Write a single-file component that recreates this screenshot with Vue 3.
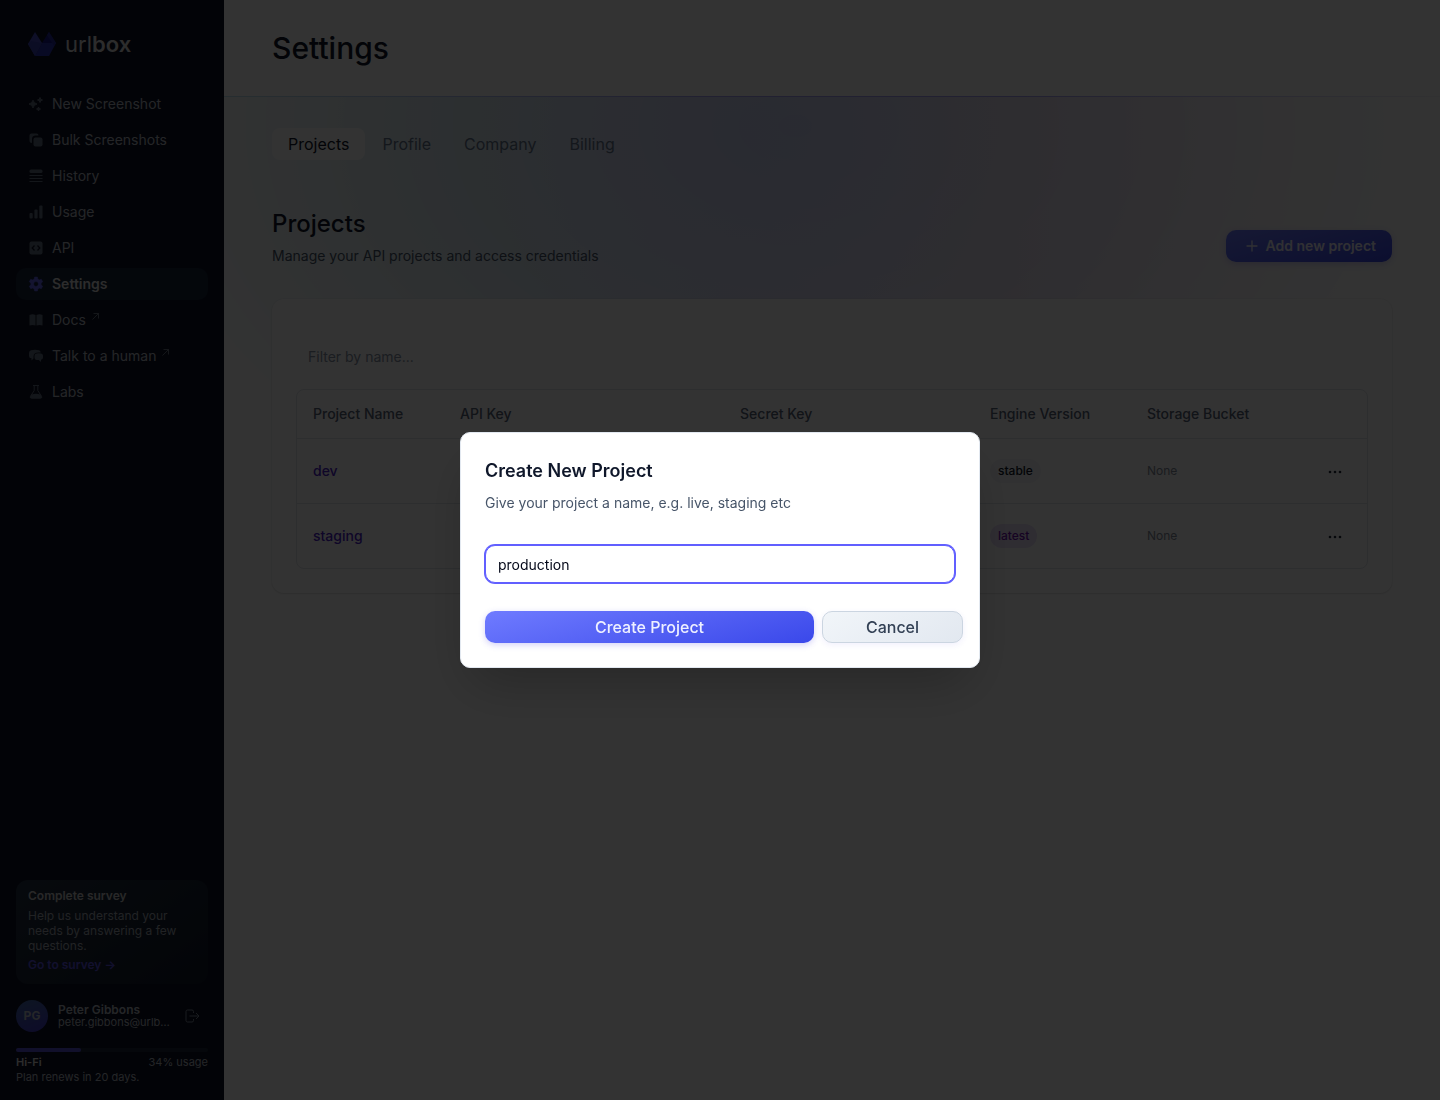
<script setup>
import { ref } from 'vue'

const nav = [
  { label: 'New Screenshot', icon: 'sparkles' },
  { label: 'Bulk Screenshots', icon: 'stack' },
  { label: 'History', icon: 'rows' },
  { label: 'Usage', icon: 'bars' },
  { label: 'API', icon: 'code' },
  { label: 'Settings', icon: 'gear', active: true },
  { label: 'Docs', icon: 'book', external: true },
  { label: 'Talk to a human', icon: 'chat', external: true },
  { label: 'Labs', icon: 'flask' },
]

const tabs = ['Projects', 'Profile', 'Company', 'Billing']
const activeTab = ref('Projects')

const projects = [
  { name: 'dev', engine: 'stable', bucket: 'None' },
  { name: 'staging', engine: 'latest', bucket: 'None' },
]

const usage = 34
const filter = ref('')
const projectName = ref('production')
const showDialog = ref(true)
</script>

<template>
  <div class="layout">
    <aside class="sidebar">
      <a href="#" class="logo">
        <svg width="28" height="24" viewBox="0 0 28 24">
          <path d="M7 0L14 11L7 24L0 12Z" fill="#464bc4" />
          <path d="M21 0L28 11H14Z" fill="#15178c" />
          <path d="M14 11H28L21 24H7Z" fill="#2c33b4" />
          <path d="M21 0L28 11L26 14L19 3Z" fill="#252a9c" />
          <path d="M0 12L3 9L14 11L7 24Z" fill="#3a40b4" />
        </svg>
        <span class="logo-text">url<b>box</b></span>
      </a>

      <nav class="nav">
        <a v-for="n in nav" :key="n.label" href="#" class="nav-item" :class="{ active: n.active }">
          <svg class="nav-icon" width="16" height="16" viewBox="0 0 16 16" fill="currentColor">
            <g v-if="n.icon === 'sparkles'" stroke="currentColor">
              <path d="M5 4.200Q5.700 7.300 9 8Q5.700 8.700 5 12Q4.300 8.700 1 8Q4.300 7.300 5 4.200Z" />
              <path d="M12 1.500Q12.300 3.700 14.500 4Q12.300 4.300 12 6.500Q11.700 4.300 9.500 4Q11.700 3.700 12 1.500Z" />
              <path d="M10.500 11Q10.700 12.800 12.500 13Q10.700 13.200 10.500 15Q10.300 13.200 8.500 13Q10.300 12.800 10.500 11Z" />
            </g>
            <g v-else-if="n.icon === 'stack'">
              <path d="M3.500 1.500h5A2 2 0 0 1 10.500 3.500H7A3.500 3.500 0 0 0 4 7v4A2.500 2.500 0 0 1 1.500 8.500v-5a2 2 0 0 1 2-2z" />
              <rect x="5.500" y="5.500" width="9" height="9" rx="2" />
            </g>
            <g v-else-if="n.icon === 'rows'">
              <rect x="1.500" y="1.500" width="13" height="3.500" rx="1.500" />
              <path d="M1.500 7h13v1h-13zM1.500 10h13v1h-13zM1.500 13h13v1h-13z" />
            </g>
            <g v-else-if="n.icon === 'bars'">
              <rect x="1.500" y="9" width="3.200" height="5.500" rx="1" />
              <rect x="6.400" y="5.500" width="3.200" height="9" rx="1" />
              <rect x="11.300" y="1.500" width="3.200" height="13" rx="1" />
            </g>
            <g v-else-if="n.icon === 'code'">
              <rect x="1.500" y="1.500" width="13" height="13" rx="2" />
              <path d="M6.500 5.500L4.200 8l2.300 2.500M9.500 5.500L11.800 8l-2.300 2.500" fill="none" stroke="#0c1226" stroke-width="1.300" />
            </g>
            <g v-else-if="n.icon === 'gear'">
              <path
                fill-rule="evenodd"
                d="M6.600 1h2.800l.5 2.100 1.300.8 2.100-.6 1.400 2.400L13.100 7.200v1.600l1.600 1.500-1.400 2.400-2.100-.6-1.300.8L9.400 15H6.600l-.5-2.100-1.300-.8-2.100.6-1.400-2.400 1.600-1.500V7.200L1.300 5.700l1.400-2.400 2.100.6 1.300-.8zM8 5.600a2.400 2.400 0 1 0 0 4.800 2.400 2.400 0 0 0 0-4.800z"
                stroke="currentColor"
                stroke-width=".5"
                stroke-linejoin="round"
              />
            </g>
            <g v-else-if="n.icon === 'book'">
              <path d="M1.500 3Q4.500 1.700 7.500 3V13.500Q4.500 12.700 1.500 13.500zM8.500 3Q11.500 1.700 14.500 3V13.500Q11.500 12.700 8.500 13.500z" />
            </g>
            <g v-else-if="n.icon === 'chat'">
              <path d="M3 2.200Q7 1.200 11 2.200Q12.500 2.700 12.700 4.500Q5.500 3.700 5.500 8.500V10.500L3.500 12.500V10.300Q1 10.200 1 8V5Q1 2.700 3 2.200z" />
              <path d="M8.500 5.500Q10.500 5.200 13 5.500Q15 5.800 15 7.800V9.500Q15 11.500 13 11.800V14L10.800 12H8.500Q6.500 11.800 6.500 9.500V7.800Q6.500 5.800 8.500 5.500z" />
            </g>
            <g v-else>
              <path d="M5 1.500h6M6.200 1.500V6.500L2.500 12.300Q1.500 14 3.500 14H12.500Q14.500 14 13.500 12.300L9.800 6.500V1.500" fill="none" stroke="currentColor" />
              <path d="M3.500 10.500Q8 9 12.500 10.500L14 13.500Q13 14.500 12 14.500H4Q3 14.500 2 13.500z" />
            </g>
          </svg>
          <span>{{ n.label }}</span>
          <svg v-if="n.external" class="external" width="7" height="7" viewBox="0 0 7 7" fill="none" stroke="currentColor">
            <path d="M.5 6.500L6.500 .5M1.500 .5h5v5" stroke-width=".8" />
          </svg>
        </a>
      </nav>

      <div class="survey">
        <h4>Complete survey</h4>
        <p>Help us understand your needs by answering a few questions.</p>
        <a href="#">Go to survey →</a>
      </div>

      <div class="user">
        <span class="avatar">PG</span>
        <div class="user-info">
          <strong>Peter Gibbons</strong>
          <span>peter.gibbons@urlb…</span>
        </div>
        <button class="logout" aria-label="Log out">
          <svg width="16" height="16" viewBox="0 0 16 16" fill="none" stroke="currentColor" stroke-linejoin="round">
            <path d="M9.500 5V3.500a1.500 1.500 0 0 0-1.500-1.500H3.500A1.500 1.500 0 0 0 2 3.500v9A1.500 1.500 0 0 0 3.500 14H8a1.500 1.500 0 0 0 1.500-1.500V11M5.500 8H15M12 5l3 3-3 3" />
          </svg>
        </button>
      </div>

      <div class="plan">
        <div class="meter"><div class="meter-fill" :style="{ width: usage + '%' }"></div></div>
        <div class="plan-row">
          <strong>Hi-Fi</strong>
          <span>{{ usage }}% usage</span>
        </div>
        <div>Plan renews in 20 days.</div>
      </div>
    </aside>

    <main class="main">
      <header class="page-head">
        <h1>Settings</h1>
      </header>

      <div class="content">
        <div class="tabs">
          <button
            v-for="t in tabs"
            :key="t"
            class="tab"
            :class="{ active: t === activeTab }"
            @click="activeTab = t"
          >{{ t }}</button>
        </div>

        <div class="section-head">
          <div>
            <h2>Projects</h2>
            <p>Manage your API projects and access credentials</p>
          </div>
          <button class="btn btn-primary btn-add" @click="showDialog = true">
            <svg width="12" height="12" viewBox="0 0 12 12" stroke="currentColor" stroke-width="1.300" stroke-linecap="round">
              <path d="M6 1v10M1 6h10" />
            </svg>
            Add new project
          </button>
        </div>

        <section class="card">
          <div class="toolbar">
            <input v-model="filter" class="filter" type="text" placeholder="Filter by name..." aria-label="Filter by name">
          </div>
          <div class="table-wrap">
            <table>
              <colgroup>
                <col class="col-name">
                <col class="col-api">
                <col class="col-secret">
                <col class="col-engine">
                <col>
                <col class="col-menu">
              </colgroup>
              <thead>
                <tr>
                  <th>Project Name</th>
                  <th>API Key</th>
                  <th>Secret Key</th>
                  <th>Engine Version</th>
                  <th>Storage Bucket</th>
                  <th></th>
                </tr>
              </thead>
              <tbody>
                <tr v-for="p in projects" :key="p.name">
                  <td><a href="#" class="project-link">{{ p.name }}</a></td>
                  <td></td>
                  <td></td>
                  <td><span class="badge" :class="p.engine">{{ p.engine }}</span></td>
                  <td class="bucket">{{ p.bucket }}</td>
                  <td class="menu-cell">
                    <button class="btn-menu" aria-label="Project menu">
                      <svg width="14" height="4" viewBox="0 0 14 4" fill="currentColor">
                        <circle cx="2" cy="2" r="1.300" />
                        <circle cx="7" cy="2" r="1.300" />
                        <circle cx="12" cy="2" r="1.300" />
                      </svg>
                    </button>
                  </td>
                </tr>
              </tbody>
            </table>
          </div>
        </section>
      </div>
    </main>

    <div v-if="showDialog" class="overlay">
      <form class="dialog" role="dialog" aria-labelledby="dialog-title" @submit.prevent="showDialog = false">
        <h3 id="dialog-title">Create New Project</h3>
        <label for="project-name">Give your project a name, e.g. live, staging etc</label>
        <input id="project-name" v-model="projectName" type="text">
        <div class="dialog-actions">
          <button type="submit" class="btn btn-primary btn-create">Create Project</button>
          <button type="button" class="btn btn-cancel" @click="showDialog = false">Cancel</button>
        </div>
      </form>
    </div>
  </div>
</template>

<style>
body {
  margin: 0;
  font-family: Inter, "Liberation Sans", sans-serif;
}
</style>

<style scoped>
* { box-sizing: border-box; }
h1, h2, h3, h4, p { margin: 0; font-weight: 500; }
button, input { font-family: inherit; }
button { cursor: pointer; }
a { text-decoration: none; }

.layout {
  display: flex;
  min-height: 100vh;
  background: white;
}

/* sidebar */
.sidebar {
  width: 224px;
  flex-shrink: 0;
  display: flex;
  flex-direction: column;
  padding: 32px 16px 15px;
  background: #0c1226;
  color: #b4bac4;
}
.logo {
  display: flex;
  align-items: center;
  gap: 9px;
  height: 24px;
  padding-left: 12px;
  color: #dcdcdc;
}
.logo-text { font-size: 22px; line-height: 24px; }
.logo-text b { font-weight: 600; }
.nav {
  display: flex;
  flex-direction: column;
  gap: 4px;
  margin-top: 32px;
}
.nav-item {
  display: flex;
  align-items: center;
  gap: 8px;
  height: 32px;
  padding: 0 12px;
  border-radius: 10px;
  color: #b4bac4;
  font-size: 14px;
  line-height: 20px;
}
.nav-icon { color: #626f80; }
.nav-item.active {
  background: #16233a;
  color: #dcdcdc;
  font-weight: 600;
}
.active .nav-icon { color: #6366f1; }
.external { margin: 0 0 8px -2px; color: #7d8797; }
.survey {
  margin-top: auto;
  padding: 8px 12px 12px;
  border-radius: 12px;
  background: linear-gradient(145deg, #223042, #101829);
  font-size: 12px;
  line-height: 15px;
  color: #a4abb5;
}
.survey h4 {
  margin-bottom: 5px;
  font-size: 12px;
  font-weight: 600;
  color: #c8c8c8;
}
.survey p { font-weight: 400; }
.survey a {
  display: block;
  margin-top: 4px;
  font-weight: 600;
  color: #5a50e0;
}
.user {
  display: flex;
  align-items: center;
  gap: 10px;
  margin-top: 16px;
}
.avatar {
  width: 32px;
  height: 32px;
  flex-shrink: 0;
  border-radius: 50%;
  background: linear-gradient(160deg, #3f6aa8, #4338ca);
  color: #b8bcc8;
  font-size: 12px;
  font-weight: 700;
  line-height: 32px;
  text-align: center;
}
.user-info {
  flex: 1;
  display: flex;
  flex-direction: column;
  font-size: 11px;
  line-height: 13px;
  white-space: nowrap;
}
.user-info strong { font-size: 12px; font-weight: 600; }
.logout {
  display: flex;
  margin-right: 8px;
  padding: 0;
  border: 0;
  background: none;
  color: #7d8797;
}
.plan {
  margin-top: 16px;
  font-size: 11px;
  line-height: 15px;
}
.meter {
  height: 4px;
  margin-bottom: 3px;
  border-radius: 2px;
  background: #1b2738;
}
.meter-fill {
  height: 100%;
  border-radius: 2px;
  background: #5551d6;
}
.plan-row {
  display: flex;
  justify-content: space-between;
}
.plan-row strong { font-weight: 600; color: #dcdcdc; }

/* page */
.main { flex: 1; min-width: 0; }
.page-head {
  display: flex;
  align-items: center;
  height: 96px;
  padding: 0 48px;
}
h1 {
  font-size: 30px;
  line-height: 36px;
  color: #0f172a;
}
.content {
  position: relative;
  padding: 32px 48px;
}
.content::before {
  content: "";
  position: absolute;
  inset: 0;
  background:
    radial-gradient(circle 260px at 43% 40px, #cbd2f6, transparent),
    linear-gradient(90deg, #d3e8ee, #d2e2ee 25%, #d6d8ee 45%, #e2dbee 65%, #eee8f4 85%, #f0f8f4);
  -webkit-mask-image: radial-gradient(ellipse 56% 460px at 47% 30px, black, rgba(0, 0, 0, 0.8) 50%, transparent);
  mask-image: radial-gradient(ellipse 56% 460px at 47% 30px, black, rgba(0, 0, 0, 0.8) 50%, transparent);
}
.content::after {
  content: "";
  position: absolute;
  inset: 0 0 auto;
  height: 1px;
  background: linear-gradient(90deg, #bfe3f0, #a5a0f5 40%, #a5a0f5 65%, #f4f4fa);
}
.content > * { position: relative; }
.tabs { display: flex; gap: 1px; }
.tab {
  height: 32px;
  padding: 0 16px;
  border: 0;
  border-radius: 8px;
  background: none;
  color: #64748b;
  font-size: 16px;
}
.tab.active { background: white; color: #0f172a; }
.section-head {
  display: flex;
  justify-content: space-between;
  align-items: flex-end;
  margin: 48px 0 33px;
}
h2 {
  font-size: 24px;
  line-height: 32px;
  color: #0f172a;
}
.section-head p {
  margin-top: 6px;
  font-size: 14px;
  font-weight: 400;
  line-height: 20px;
  color: #475569;
}
.btn {
  height: 32px;
  border: 0;
  border-radius: 10px;
  font-size: 16px;
  font-weight: 500;
  box-shadow: 0 2px 6px rgba(79, 70, 229, 0.25);
}
.btn-primary {
  background: linear-gradient(165deg, #6f7bff, #3a48ea);
  color: #eef0ff;
}
.btn-add {
  display: flex;
  align-items: center;
  gap: 8px;
  margin-bottom: 4px;
  padding: 0 16px 0 20px;
  font-size: 14px;
  font-weight: 600;
  line-height: 20px;
}
.card {
  padding: 0 24px 24px;
  border-radius: 12px;
  background: white;
  box-shadow: 0 0 0 1px rgba(15, 23, 42, 0.03), 0 1px 2px rgba(0, 0, 0, 0.1);
}
.toolbar { padding: 40px 0 16px; }
.filter {
  display: block;
  width: 280px;
  height: 34px;
  padding: 0 12px;
  border: 0;
  background: none;
  font-size: 14px;
}
.filter::placeholder { color: #8590a3; opacity: 1; }
.table-wrap {
  border: 1px solid #dfe3e9;
  border-radius: 8px;
}
table {
  width: 100%;
  table-layout: fixed;
  border-spacing: 0;
  font-size: 14px;
  line-height: 20px;
}
.col-name { width: 13.74%; }
.col-api { width: 26.17%; }
.col-secret { width: 23.36%; }
.col-engine { width: 14.67%; }
.col-menu { width: 6%; }
th {
  height: 48px;
  padding: 0 16px;
  color: #566377;
  font-weight: 500;
  text-align: left;
}
td {
  height: 65px;
  padding: 0 16px;
  border-top: 1px solid #dfe3e9;
}
.project-link { color: #4a22c8; font-weight: 500; }
.badge {
  display: inline-block;
  padding: 0 8px;
  border-radius: 12px;
  font-size: 12px;
  font-weight: 500;
  line-height: 24px;
}
.badge.stable { background: #f4f5f8; color: #0f172a; }
.badge.latest { background: #ebe0fa; color: #7012ae; }
.bucket { color: #828b99; font-size: 12px; }
.menu-cell { text-align: right; }
.btn-menu {
  width: 32px;
  height: 32px;
  padding: 0;
  border: 0;
  background: none;
  color: #1e293b;
  line-height: 32px;
}
.btn-menu svg { vertical-align: middle; }

/* dialog */
.overlay {
  position: fixed;
  inset: 0;
  display: flex;
  align-items: center;
  justify-content: center;
  background: rgba(0, 0, 0, 0.8);
}
.dialog {
  width: 520px;
  padding: 24px;
  border: 1px solid #e2e8f0;
  border-radius: 10px;
  background: white;
  box-shadow: 0 25px 50px -12px rgba(0, 0, 0, 0.25);
}
.dialog h3 {
  font-size: 18px;
  font-weight: 600;
  line-height: 28px;
  color: #0f172a;
}
.dialog label {
  display: block;
  margin: 8px 0 32px;
  font-size: 14px;
  line-height: 20px;
  color: #475569;
}
.dialog input {
  display: block;
  width: 100%;
  height: 38px;
  padding: 0 12px;
  border: 1px solid #615fff;
  border-radius: 10px;
  outline: 0;
  box-shadow: 0 0 0 1px #615fff;
  color: #020617;
  font-size: 14px;
}
.dialog-actions {
  display: flex;
  gap: 8px;
  margin-top: 28px;
}
.btn-create { flex: 0 0 70%; }
.btn-cancel {
  flex: 0 0 30%;
  border: 1px solid #cbd5e1;
  background: linear-gradient(145deg, #f1f5f9, #e2e8f0);
  color: #334155;
  box-shadow: 0 2px 6px rgba(79, 70, 229, 0.08);
}
</style>
